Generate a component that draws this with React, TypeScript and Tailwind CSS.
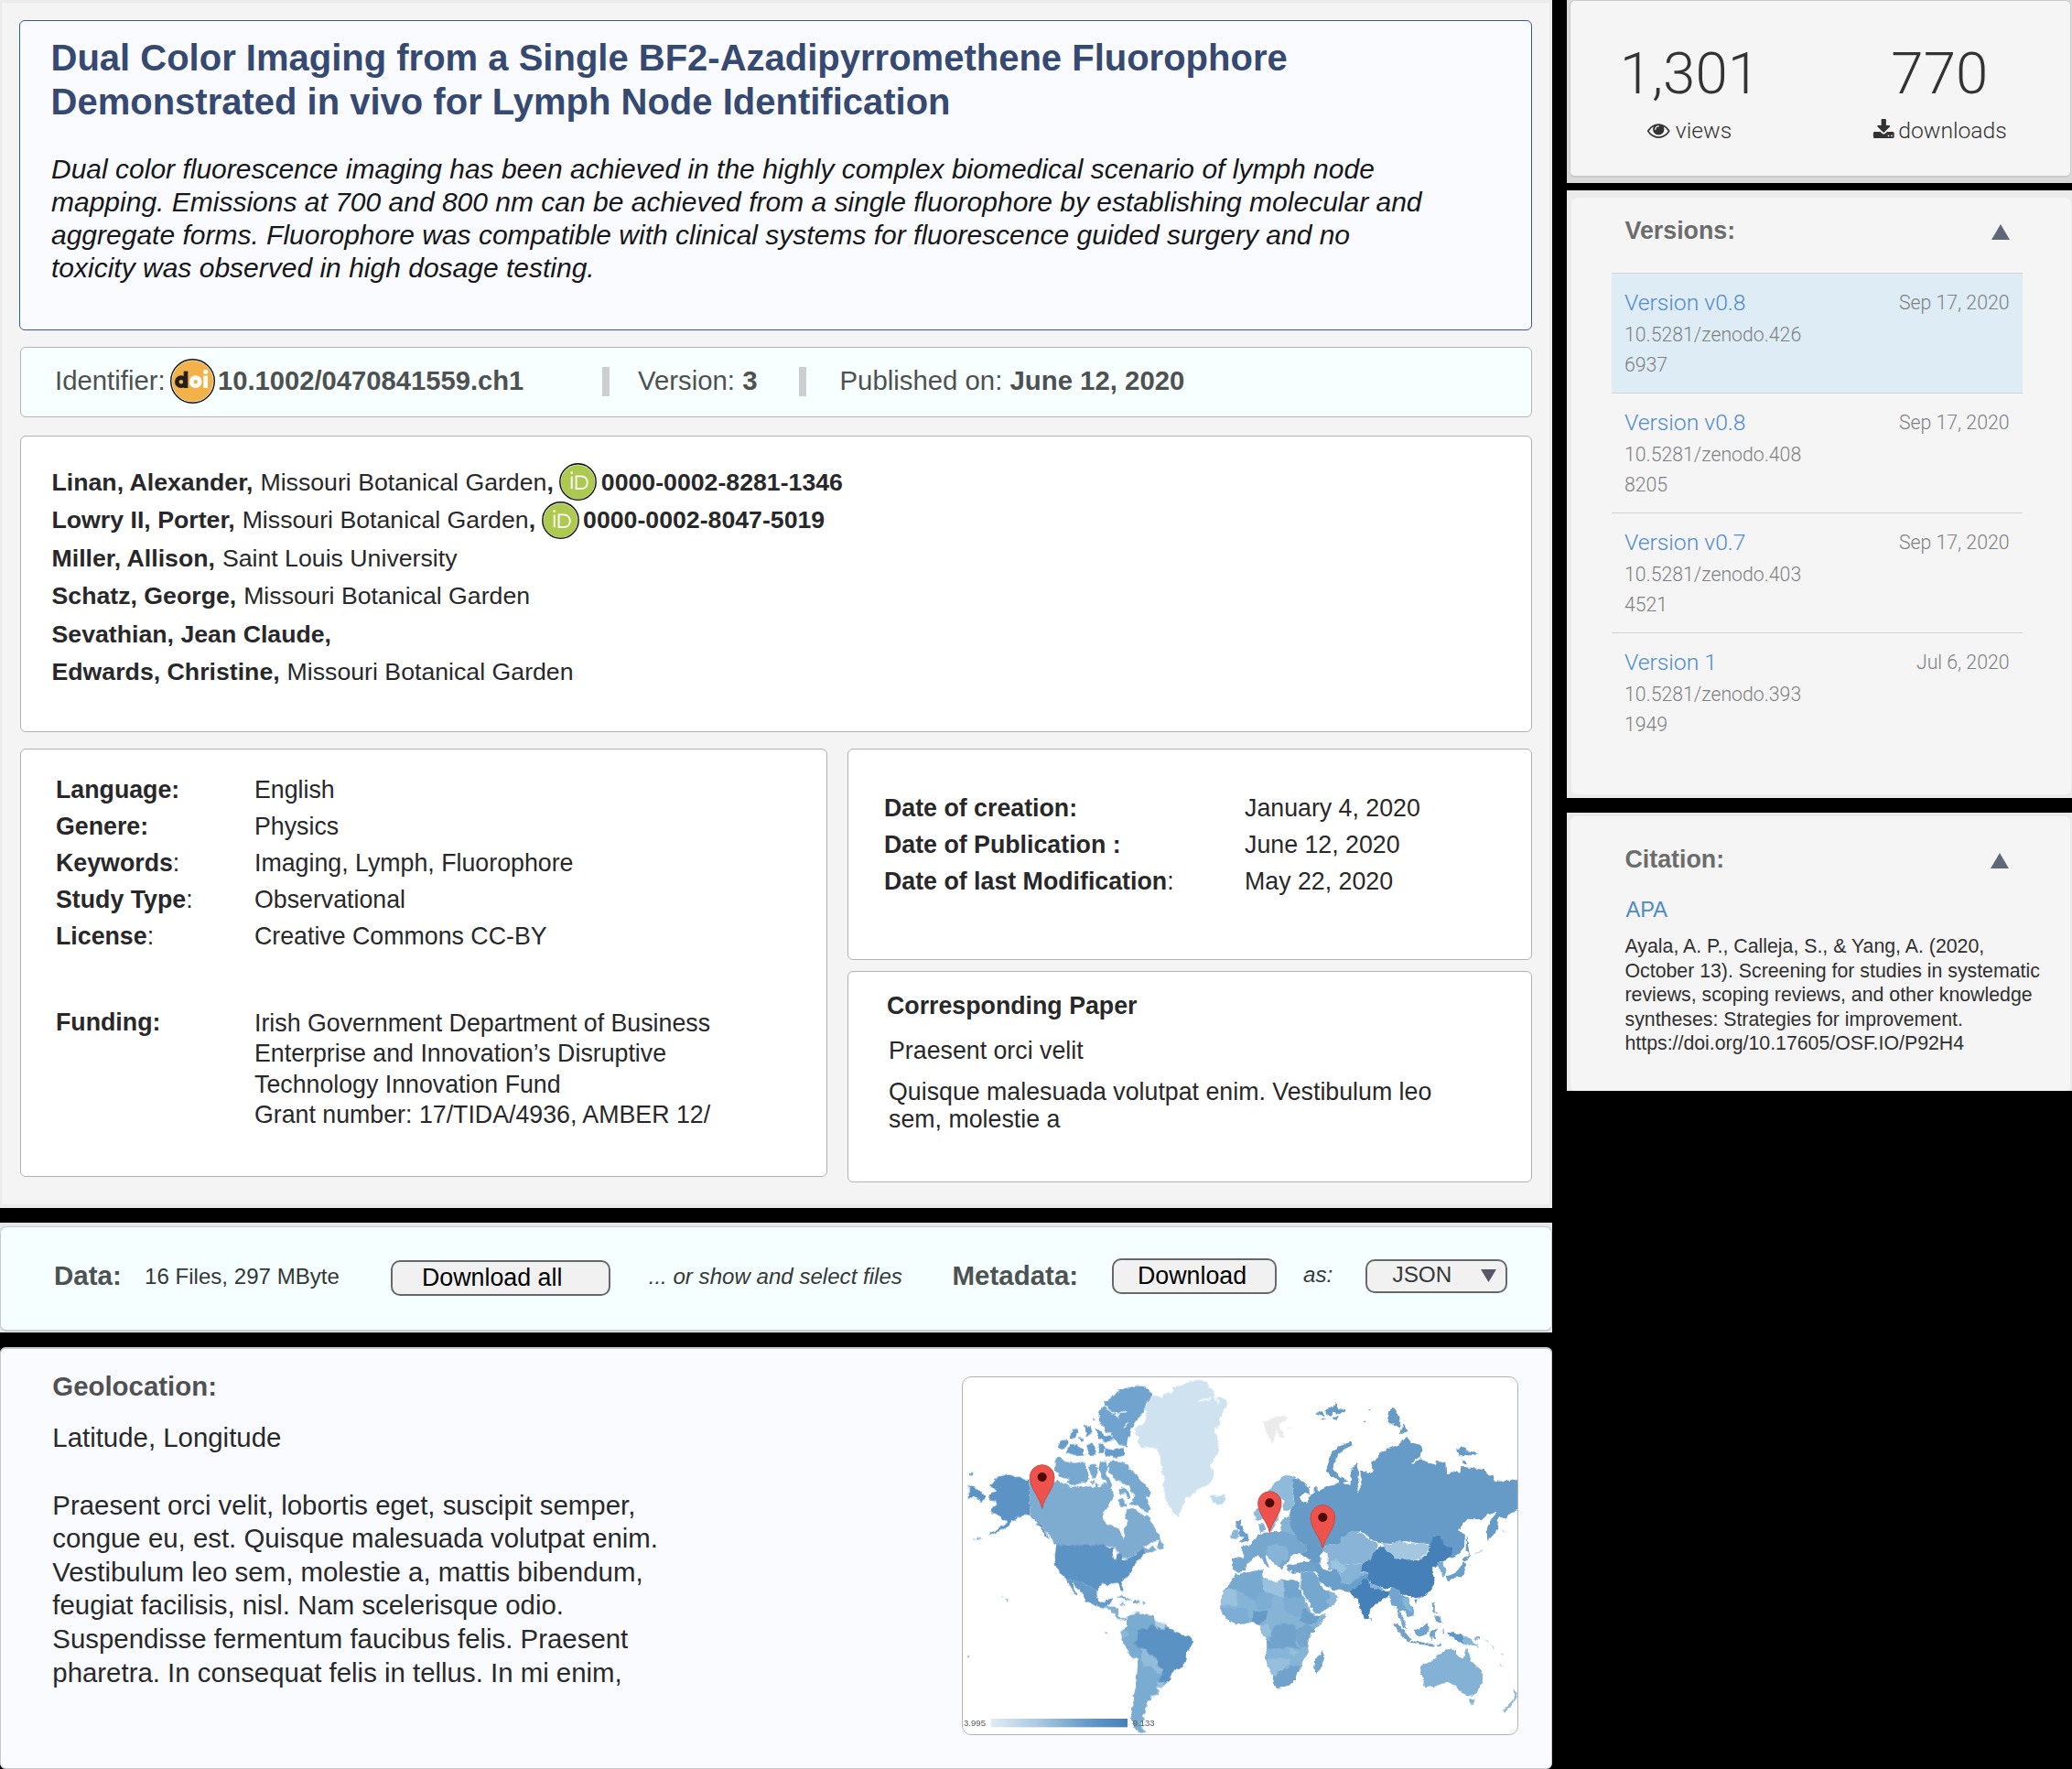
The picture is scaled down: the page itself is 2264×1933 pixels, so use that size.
import React from "react";

type Shape = [fill: string, d: string];

/* Land areas of the western half; chart units are a third of a pixel. */
const WEST: Shape[] = [
  ["#5a93c4", "M255,380L235,378 222,370 208,371 195,365 178,360 162,368 150,368 135,385 122,402 140,408 146,418 132,422 122,436 126,448 142,450 148,460 135,470 128,480 135,492 148,494 158,502 165,512 182,514 170,528 150,542 130,552 115,562 135,556 165,543 188,530 200,512 215,500 222,505 235,494 250,495 262,498 290,525 310,556 318,575 306,565 285,530 268,510 255,498Z"],
  ["#5a93c4", "M55,395L75,406 108,430 105,440 98,452 85,445 70,436 55,442Z M56,355L70,357 66,366 57,364Z"],
  ["#7eabd0", "M255,380L270,388 300,395 335,385 345,380 358,390 380,396 390,404 410,400 430,406 452,400 465,408 470,388 482,405 490,395 505,390 520,405 528,420 530,440 520,452 508,468 495,488 490,505 505,520 520,528 540,540 553,548 558,570 563,575 567,562 562,545 572,530 576,515 568,500 572,478 590,472 605,478 618,490 632,500 640,492 650,515 665,540 680,560 682,578 660,584 640,590 628,600 640,606 660,598 668,610 648,622 634,618 626,606 610,616 595,628 575,638 557,634 545,615 530,600 510,600 500,595 342,596 328,580 318,565 305,545 290,525 275,510 255,496Z"],
  ["#7eabd0", "M680,575L692,590 698,606 685,608 668,600 672,588Z"],
  ["#5a93c4", "M342,595L500,595 512,604 535,604 525,614 530,640 538,640 540,618 552,622 558,642 575,640 600,625 615,612 626,604 635,622 620,635 608,648 600,655 588,672 582,688 570,700 558,712 554,722 562,742 555,745 547,725 540,718 520,720 510,726 492,722 480,735 474,745 460,738 452,725 435,722 425,715 410,715 395,710 375,706 360,692 347,675 337,655 337,625Z"],
  ["#669bc9", "M375,706L395,710 410,715 425,715 435,722 452,725 460,738 474,745 475,765 485,780 500,782 508,772 525,768 522,780 512,792 500,800 480,796 460,788 435,775 430,758 415,740 400,720 392,714 398,730 412,755 405,758 390,735Z"],
  ["#83b1d4", "M500,800L512,795 530,795 545,800 545,820 552,832 572,834 568,842 545,838 530,818 515,806Z"],
  ["#6fa2cc", "M538,766L555,758 575,768 592,776 575,774 555,766Z M594,775L616,778 612,784 592,784Z M624,782h10v4h-10Z M550,785h14v4h-14Z M174,768L184,775 180,780Z M160,762h5v4h-5Z M502,877h6v6h-6Z M50,960h8v4h-8Z M66,571h6v4h-6Z M80,569h14v4h-14Z"],
  ["#76a8d0", "M512,320L545,318 560,325 578,330 580,345 600,355 610,372 620,385 640,400 652,425 645,435 635,430 640,455 648,475 640,488 620,478 605,462 578,460 590,450 600,430 588,420 580,400 560,392 550,382 538,388 530,370 515,352 510,335Z M545,412L562,405 578,415 585,440 575,440 570,425 552,428Z M545,448L556,436 566,450 574,468 550,466Z"],
  ["#76a8d0", "M338,310L352,306 372,320 400,325 432,320 442,345 450,375 440,385 420,392 400,398 375,388 385,380 365,375 350,370 345,355 335,345Z M446,335L472,325 478,360 470,378 455,368Z M485,318L505,318 510,345 500,360 515,375 525,400 515,405 505,385 488,370 480,345Z M455,385L468,380 462,396Z"],
  ["#669cca", "M345,275L355,255 375,245 380,262 365,280 350,280Z M372,290L390,262 408,266 430,280 432,300 410,302 390,295Z M385,235L400,212 412,218 405,240 390,245Z M433,198L455,208 460,230 440,235Z M440,265L462,262 475,296 450,300Z M480,260L495,262 500,292 482,292Z M500,276L525,282 562,275 565,300 540,306 505,302Z M468,210L490,222 500,240 520,232 530,250 505,255 480,245Z M460,178L467,180 464,188Z M415,238L432,246 425,258Z"],
  ["#6fa4ce", "M500,125L520,112 545,92 550,82 575,78 600,72 625,73 645,85 657,100 650,120 635,140 625,160 610,180 600,190 595,205 585,212 588,235 575,245 572,270 545,265 535,250 525,240 520,225 505,225 495,205 482,190 480,165 490,145 500,138Z"],
  ["#cfe2f0", "M600,210L630,195 637,172 635,160 628,148 640,120 665,102 690,112 700,92 720,98 725,80 760,65 795,52 830,55 845,75 858,95 855,110 885,108 907,130 890,155 880,175 875,200 860,215 868,235 875,262 870,290 858,315 845,335 858,355 855,380 840,397 815,405 795,420 780,435 765,440 755,465 745,500 725,490 712,470 700,445 695,415 690,395 698,380 690,360 685,330 682,305 670,280 655,275 635,272 620,278 612,262 605,255 615,245 603,235 598,222Z"],
  ["#bfd8ea", "M842,432L855,430 875,434 893,428 897,445 885,460 865,460 850,455 855,445Z"],
  ["#7aabd1", "M572,834L585,820 610,815 630,822 655,825 665,838 680,848 698,850 712,868 755,888 780,895 791,910 780,930 770,945 768,970 755,995 735,1000 722,1015 715,1035 700,1048 688,1062 672,1060 680,1072 670,1085 652,1088 650,1102 638,1108 642,1118 632,1130 635,1142 625,1155 632,1165 620,1180 622,1195 638,1208 615,1210 600,1198 590,1180 586,1160 590,1130 597,1110 595,1085 602,1060 605,1020 608,990 608,970 590,960 575,945 568,925 555,905 558,885 565,870 572,855Z"],
  ["#5a92c4", "M612,872L640,868 655,855 662,862 690,870 710,862 712,872 730,880 755,888 780,893 791,910 780,930 770,945 768,970 755,995 735,1000 722,1015 715,1035 700,1048 690,1042 675,1038 688,1022 688,1000 675,990 670,965 648,955 635,935 612,930 595,915 610,900Z"],
  ["#93bcdb", "M620,932L635,935 648,955 670,965 672,988 688,1000 688,1017 672,1015 655,992 625,990 620,965Z"],
  ["#8ab6d8", "M556,872L575,876 580,890 562,900 554,892Z"],
  ["#b2d0e5", "M662,838L680,848 700,852 696,866 670,866Z"],
  ["#9cc1de", "M675,1038L696,1048 688,1062 672,1058Z"],
];

/* Land areas of the eastern half, drawn from their own origin. */
const EAST: Shape[] = [
  ["#ebebeb", "M180,190L210,180 225,168 262,176 248,190 230,196 250,240 235,242 222,215 215,258 207,264 190,225Z M256,208h18v3h-18Z M288,172h5v3h-5Z"],
  ["#6a9fcb", "M90,516L108,510 105,525 115,540 132,568 130,580 100,588 114,572 98,558 100,545 90,535Z"],
  ["#8ab6d8", "M78,550L95,543 98,560 92,575 73,572Z"],
  ["#90bada", "M150,482L165,470 185,440 205,405 230,380 255,365 278,368 285,378 275,390 278,420 282,462 270,480 250,482 240,472 250,450 238,440 225,470 232,500 222,525 212,548 202,540 190,512 175,508 155,512Z"],
  ["#84b2d5", "M164,525L180,525 188,548 170,552Z M236,520L250,502 270,500 272,520 290,545 280,565 245,568 238,545Z"],
  ["#76a7cf", "M105,600L132,594 150,575 165,560 185,553 205,552 236,548 262,560 290,560 300,585 322,592 325,610 310,622 285,620 270,630 265,650 250,655 240,678 225,660 200,640 190,625 185,640 205,665 195,668 178,645 165,630 150,632 140,645 125,655 125,665 115,680 95,682 80,678 80,634 115,637 118,620Z"],
  ["#86b4d6", "M192,600L212,590 240,595 262,610 262,640 240,645 240,660 228,662 205,640 192,622Z"],
  ["#6fa2cc", "M257,662L280,655 300,652 330,645 352,650 370,660 362,682 340,680 305,682 280,686 262,678Z"],
  ["#669bc8", "M278,375L300,380 330,405 332,430 318,425 300,432 310,442 325,450 328,438 350,420 345,405 352,418 370,412 395,400 425,395 432,382 465,398 470,350 485,325 494,360 490,400 488,428 502,402 498,352 530,355 542,350 530,325 560,310 560,295 590,278 630,262 650,238 665,258 695,265 700,290 692,312 720,322 745,330 748,320 777,322 780,362 800,350 825,358 828,338 865,340 905,348 915,362 935,370 938,386 980,382 1020,380 1020,476 990,490 975,508 950,500 948,540 935,560 915,580 912,545 920,520 935,500 945,488 920,490 900,508 870,510 850,508 818,545 842,560 838,600 822,622 798,640 780,625 800,605 770,590 740,562 725,590 700,590 640,580 600,590 560,588 530,570 500,550 470,550 435,575 430,590 400,590 372,602 385,612 366,628 368,655 340,650 305,625 325,610 320,592 300,585 285,560 270,535 265,500 270,480 283,460 278,420 275,390Z"],
  ["#669bc8", "M385,350L395,320 405,290 430,270 470,255 474,266 445,280 422,300 412,325 408,345 430,372 460,385 440,388 400,366Z M590,160L608,142 620,165 630,190 625,210 600,195 585,180Z M628,232L640,195 655,222Z M812,280L835,272 850,285 885,292 872,300 820,300Z M835,312L850,328 832,325Z M350,160L375,155 380,172 362,170Z M385,150L408,142 418,125 425,145 450,150 430,165 408,160 400,172 385,162Z M370,178h14v5h-14Z M404,176L425,172 418,182Z M346,405h12v12h-12Z M845,562L852,598 857,628 844,610Z M525,150h6v5h-6Z M510,190h6v4h-6Z"],
  ["#8ab4d7", "M372,602L400,590 430,590 435,570 470,546 500,555 530,575 558,590 545,615 530,640 505,655 470,655 440,660 420,640 398,645 388,625 375,615Z"],
  ["#86b4d6", "M390,640L420,640 445,660 470,655 505,655 500,680 525,685 500,700 480,715 460,725 430,715 435,690 415,675 395,675Z"],
  ["#9dc4df", "M400,645L425,645 455,668 440,685 405,668Z"],
  ["#6a9fcb", "M345,652L365,660 375,672 395,678 415,675 435,690 432,715 440,744 410,740 385,728 365,712 355,685Z M432,715L460,725 500,695 525,685 520,700 500,722 480,735 475,750 440,745Z"],
  ["#76a7cf", "M303,682L345,680 360,700 370,722 385,740 405,750 425,760 415,785 385,805 350,822 340,800 320,765 303,735Z"],
  ["#8ab6d8", "M390,742L408,750 426,762 415,785 395,795 388,775 402,765Z"],
  ["#4480b8", "M560,600L580,600 590,615 630,640 690,645 725,615 720,600 735,565 758,562 770,590 802,605 795,630 780,640 755,650 750,662 733,670 742,695 740,722 725,745 700,765 678,768 660,758 635,757 620,738 600,735 570,735 530,718 520,700 525,685 500,678 505,655 530,640 545,615Z M675,775L686,770 680,784Z"],
  ["#4480b8", "M478,738L505,712 520,700 530,722 560,740 585,742 600,745 590,765 570,772 545,790 530,808 525,838 512,836 495,800 490,770 475,765 465,750Z"],
  ["#86b4d6", "M530,718L575,736 570,746 530,730Z M528,832L538,838 532,846Z"],
  ["#a4c6df", "M568,590L600,592 630,576 650,588 680,592 712,588 728,605 715,620 690,642 650,645 610,635 590,618Z"],
  ["#72a5cd", "M590,745L605,732 622,738 635,760 655,765 655,780 675,805 672,825 655,830 645,812 630,808 635,830 648,855 650,870 638,862 622,830 618,795 600,792Z"],
  ["#86b8d6", "M635,768L650,764 660,790 668,812 655,808 640,790Z"],
  ["#79aad1", "M755,650L770,648 780,690 768,700 760,675 750,664Z"],
  ["#6a9fcb", "M838,648L844,668 832,697 800,702 785,714 778,696 810,686 826,665Z M832,636L860,626 852,644 838,648Z"],
  ["#6fa2cc", "M733,782L743,785 742,808 755,818 735,815Z M740,828L760,830 766,852 750,846Z M605,850L622,855 650,882 664,905 650,908 625,880Z M658,907L700,912 742,920 738,928 690,918 655,912Z M675,872L700,865 715,850 725,865 716,890 695,896 680,888Z M726,878L735,870 755,870 742,882 750,900 740,902 736,892 732,910Z M766,868h6v16h-6Z M745,920L765,916 758,926Z"],
  ["#5f97c6", "M785,880L800,882 815,885 838,890 838,920 815,905 795,895Z"],
  ["#86b4d6", "M838,890L862,902 872,916 888,930 862,924 838,920Z M870,898L890,892 890,902 876,905Z"],
  ["#c9d6de", "M905,905L920,912 916,916Z M922,916L942,932 934,932Z M962,948h8v6h-8Z M955,980L970,990 962,992Z M880,620L900,608 902,612 872,630Z M960,542L974,550 966,550Z"],
  ["#84b2d5", "M697,990L715,980 740,970 752,955 770,945 785,935 812,938 812,955 835,965 845,930 855,950 862,975 885,995 900,1020 898,1045 885,1070 870,1088 845,1085 825,1075 812,1055 790,1045 765,1048 740,1058 712,1062 705,1050 707,1030 695,1010Z M857,1098L874,1098 870,1116 862,1119Z"],
  ["#90bcda", "M998,1062L1014,1078 1012,1095 1000,1108 988,1130 972,1144 964,1136 985,1115 1000,1100 1005,1085Z"],
  ["#86b4d6", "M90,690L120,685 155,678 178,675 182,700 200,708 225,718 240,704 262,710 298,712 298,735 315,765 338,812 348,828 385,818 375,845 350,870 330,895 325,915 330,950 310,970 303,1000 290,1012 285,1035 260,1058 222,1064 215,1040 200,1000 185,965 192,930 190,900 170,880 172,860 145,845 130,850 90,855 60,835 38,805 40,775 55,740 78,715Z"],
  ["#76a8d0", "M85,695L120,685 178,677 176,712 182,745 155,780 130,765 95,740 60,738Z"],
  ["#9ac1dd", "M178,705L200,708 225,718 245,706 248,768 215,755 182,745Z M55,740L90,738 97,795 40,792 42,770Z"],
  ["#72a5cd", "M248,710L298,712 296,735 310,766 248,766Z"],
  ["#7dadd2", "M248,768L312,766 318,795 300,830 262,820 245,800Z M155,780L182,745 215,758 205,800 160,805Z M40,800L130,800 138,848 90,855 60,835Z"],
  ["#659ac7", "M145,812L195,808 190,835 165,855 142,845Z"],
  ["#6b9fca", "M315,800L345,828 372,825 350,850 320,855 298,840Z"],
  ["#70a3cc", "M215,860L245,850 282,856 290,880 285,915 298,935 250,925 210,920 200,900Z M192,906L210,920 250,926 248,935 192,932Z"],
  ["#74a6ce", "M288,870L318,856 350,868 328,900 325,930 298,930 288,900Z"],
  ["#96bfdc", "M190,968L240,965 268,970 262,990 240,1008 225,1006 222,1028 208,1020Z M172,860L200,850 206,880 188,900 172,880Z M268,930L295,945 285,960 265,950Z"],
  ["#6fa2cc", "M208,1025L225,1022 228,1006 262,1000 270,985 300,992 290,1012 285,1035 260,1058 222,1064Z"],
  ["#74a6ce", "M373,938L381,960 368,1000 355,1012 344,1000 348,968 365,957Z"],
];

const SEAS =
  "M364,630L378,614 390,618 380,634 386,650 396,668 392,678 374,670 376,652Z M268,640L284,620 310,628 336,642 330,650 300,645 272,656Z M368,722L386,734 396,744 380,742Z M318,428L300,434 306,452 316,448 322,458 330,440Z M665,326L690,306 692,312 672,328Z";

function Pin({ x, y, r, tip }: { x: number; y: number; r: number; tip: number }) {
  return (
    <g>
      <path
        d={`M${x},${tip} C${x - 6},${y + r * 1.65} ${x - r},${y + r * 0.95} ${x - r},${y} A${r},${r} 0 1 1 ${x + r},${y} C${x + r},${y + r * 0.95} ${x + 6},${y + r * 1.65} ${x},${tip}Z`}
        fill="#ee524d"
        stroke="#cd4640"
        strokeWidth="3"
      />
      <circle cx={x} cy={y} r="15" fill="#4b0805" />
    </g>
  );
}

function WorldMap() {
  return (
    <svg viewBox="35 44 1818 1170" className="block h-full w-full" preserveAspectRatio="none">
      <defs>
        <filter id="coast" x="0" y="0" width="1900" height="1300" filterUnits="userSpaceOnUse">
          <feTurbulence type="fractalNoise" baseFrequency="0.06" numOctaves="3" seed="4" result="n" />
          <feDisplacementMap in="SourceGraphic" in2="n" scale="13" xChannelSelector="R" yChannelSelector="G" />
        </filter>
        <linearGradient id="scale">
          <stop offset="0" stopColor="#e0ebf4" />
          <stop offset="0.35" stopColor="#a9c8e0" />
          <stop offset="0.7" stopColor="#669bc8" />
          <stop offset="1" stopColor="#4480b8" />
        </linearGradient>
      </defs>
      <g filter="url(#coast)">
        {WEST.map(([fill, d], i) => (
          <path key={i} fill={fill} d={d} />
        ))}
        <path
          d="M500,138L520,158 545,165 570,155M535,165L545,180M575,195L560,210M805,122L850,112M862,112L875,130M455,300L480,305 560,308M440,240L470,255 510,262"
          fill="none"
          stroke="#fff"
          strokeWidth="4"
        />
        <g transform="translate(840 0)">
          {EAST.map(([fill, d], i) => (
            <path key={i} fill={fill} d={d} />
          ))}
          <path d={SEAS} fill="#fff" />
        </g>
      </g>
      <Pin x={295} y={371} r={40} tip={474} />
      <Pin x={1041} y={456} r={38} tip={553} />
      <Pin x={1215} y={503} r={40} tip={605} />
      <rect x="127" y="1163" width="448" height="28" fill="url(#scale)" />
      <g fill="#55585b" fontFamily='"Liberation Sans", sans-serif' fontSize="28">
        <text x="38" y="1187" textLength="72" lengthAdjust="spacingAndGlyphs">3.995</text>
        <text x="592" y="1187" textLength="72" lengthAdjust="spacingAndGlyphs">9.133</text>
      </g>
    </svg>
  );
}

function DoiLogo() {
  return (
    <svg viewBox="0 0 49 49" className="block size-[49px]">
      <circle cx="24.5" cy="24.5" r="23.8" fill="#fff" stroke="#111" strokeWidth="1.4" />
      <circle cx="24.5" cy="24.5" r="22.5" fill="#f2b149" />
      <g fill="none" strokeWidth="4.6">
        <circle cx="11.9" cy="25.2" r="4.6" stroke="#231f20" />
        <path d="M17,13.6V32" stroke="#231f20" />
        <circle cx="27.7" cy="25.2" r="4.6" stroke="#fff" />
        <path d="M38.7,18.6V32" stroke="#fff" />
      </g>
      <circle cx="38.7" cy="14.3" r="2.6" fill="#fff" />
    </svg>
  );
}

function OrcidLogo() {
  return (
    <svg viewBox="0 0 41 41" className="block size-[41px] shrink-0">
      <circle cx="20.5" cy="20.5" r="19.7" fill="#e8e8e4" stroke="#111" strokeWidth="1.4" />
      <circle cx="20.5" cy="20.9" r="18.6" fill="#adc94f" />
      <g fill="none" stroke="#fff" strokeWidth="1.9">
        <path d="M13.7,14.6V28.2" />
        <path d="M18.6,14.4V28h5.2c4.6,0 7-3 7-6.8s-2.4-6.8-7-6.8Z" />
      </g>
      <circle cx="13.7" cy="10.6" r="1.3" fill="#fff" />
    </svg>
  );
}

function EyeIcon() {
  return (
    <svg viewBox="0 0 1792 1792" className="block size-[24.5px]" fill="#333">
      <path d="M1664 960q-152-236-381-353 61 104 61 225 0 185-131.5 316.5t-316.5 131.5-316.5-131.5-131.5-316.5q0-121 61-225-229 117-381 353 133 205 333.5 326.5t434.5 121.5 434.5-121.5 333.5-326.5zm-720-384q0-20-14-34t-34-14q-125 0-214.5 89.5t-89.5 214.5q0 20 14 34t34 14 34-14 14-34q0-86 61-147t147-61q20 0 34-14t14-34zm848 384q0 34-20 69-140 230-376.5 368.5t-499.5 138.5-499.5-139-376.5-368q-20-35-20-69t20-69q140-229 376.5-368t499.5-139 499.5 139 376.5 368q20 35 20 69z" />
    </svg>
  );
}

function DownloadIcon() {
  return (
    <svg viewBox="0 0 1792 1792" className="block size-[24.5px]" fill="#333">
      <path d="M1344 1344q0-26-19-45t-45-19-45 19-19 45 19 45 45 19 45-19 19-45zm256 0q0-26-19-45t-45-19-45 19-19 45 19 45 45 19 45-19 19-45zm128-224v320q0 40-28 68t-68 28h-1472q-40 0-68-28t-28-68v-320q0-40 28-68t68-28h465l135 136q58 56 136 56t136-56l136-136h464q40 0 68 28t28 68zm-325-569q17 41-14 70l-448 448q-18 19-45 19t-45-19l-448-448q-31-29-14-70 17-39 59-39h256v-448q0-26 19-45t45-19h256q26 0 45 19t19 45v448h256q42 0 59 39z" />
    </svg>
  );
}

function Triangle({ down = false }: { down?: boolean }) {
  return down ? (
    <svg viewBox="0 0 17 14" className="block h-[14px] w-[17px]">
      <path d="M0,0H17L8.5,14Z" fill="#555868" />
    </svg>
  ) : (
    <svg viewBox="0 0 20 17" className="block h-[17px] w-[20px]">
      <path d="M0,17H20L10,0Z" fill="#5f6878" />
    </svg>
  );
}

const AUTHORS = [
  { name: "Linan, Alexander,", place: "Missouri Botanical Garden", orcid: "0000-0002-8281-1346" },
  { name: "Lowry II, Porter,", place: "Missouri Botanical Garden", orcid: "0000-0002-8047-5019" },
  { name: "Miller, Allison,", place: "Saint Louis University" },
  { name: "Schatz, George,", place: "Missouri Botanical Garden" },
  { name: "Sevathian, Jean Claude,", place: "" },
  { name: "Edwards, Christine,", place: "Missouri Botanical Garden" },
];

const VERSIONS = [
  { title: "Version v0.8", doi: ["10.5281/zenodo.426", "6937"], date: "Sep 17, 2020" },
  { title: "Version v0.8", doi: ["10.5281/zenodo.408", "8205"], date: "Sep 17, 2020" },
  { title: "Version v0.7", doi: ["10.5281/zenodo.403", "4521"], date: "Sep 17, 2020" },
  { title: "Version 1", doi: ["10.5281/zenodo.393", "1949"], date: "Jul 6, 2020" },
];

const CARD = "rounded-[6px] border border-[#b0b2b2] bg-white";

function Record() {
  return (
    <section className="h-[1320px] border-t-[3px] border-r-[3px] border-b-[4px] border-l-2 border-[#ebebeb] bg-[#f4f4f4] pt-[19px] pl-[19px] whitespace-nowrap">
      <div className="h-[339px] w-[1653px] rounded-[6px] border-x border-y-[1.5px] border-[#3d5787] bg-[#fafbff] pt-[16px] pl-[33.5px]">
        <h1 className="text-[40px] leading-[48px] font-bold text-[#364970]">
          Dual Color Imaging from a Single BF2-Azadipyrromethene Fluorophore
          <br />
          Demonstrated in vivo for Lymph Node Identification
        </h1>
        <p className="mt-[31.5px] pl-[0.5px] text-[30px] leading-[36.1px] text-[#16171a] italic">
          Dual color fluorescence imaging has been achieved in the highly complex biomedical scenario of lymph node
          <br />
          mapping. Emissions at 700 and 800 nm can be achieved from a single fluorophore by establishing molecular and
          <br />
          aggregate forms. Fluorophore was compatible with clinical systems for fluorescence guided surgery and no
          <br />
          toxicity was observed in high dosage testing.
        </p>
      </div>

      <div className="mt-[18px] ml-px flex h-[77px] w-[1652px] items-center rounded-[6px] border border-[#b0b5b5] bg-[#f7ffff] pb-[2px] pl-[37px] text-[29.35px] leading-[40px] text-[#4d5151]">
        <div className="-mt-px w-[125.5px]">Identifier:</div>
        <div className="w-[52.5px]">
          <DoiLogo />
        </div>
        <div className="-mt-px w-[420px] text-[29.2px] font-bold">10.1002/0470841559.ch1</div>
        <div className="h-8 w-2 bg-[#cbcfcf]" />
        <div className="-mt-[2px] w-[207px] pl-[31px]">
          Version: <b>3</b>
        </div>
        <div className="h-8 w-2 bg-[#cbcfcf]" />
        <div className="-mt-[2px] pl-[36.5px]">
          Published on: <b>June 12, 2020</b>
        </div>
      </div>

      <div className={`${CARD} mt-[20px] ml-px h-[324px] w-[1652px] pt-[30px] pl-[33.5px] text-[26.7px] text-[#28282a]`}>
        {AUTHORS.map((a) => (
          <div key={a.name} className="flex h-[41.4px] items-center leading-[41.4px]">
            <span>
              <b>{a.name}</b> <span className="ml-[0.5px]">{a.place}</span>
              {a.orcid && <b>,</b>}
            </span>
            {a.orcid && (
              <>
                <span className="-mt-[2px] ml-[6.5px]">
                  <OrcidLogo />
                </span>
                <b className="ml-[4.5px]">{a.orcid}</b>
              </>
            )}
          </div>
        ))}
      </div>

      <div className="mt-[18px] ml-px flex items-start text-[26.75px] leading-[40px] text-[#28282a]">
        <div className={`${CARD} flex h-[468px] w-[882px] pl-[38px]`}>
          <div className="w-[217px] pt-[24px] font-bold">
            <div>Language:</div>
            <div>Genere:</div>
            <div>
              Keywords<span className="font-normal">:</span>
            </div>
            <div>
              Study Type<span className="font-normal">:</span>
            </div>
            <div>
              License<span className="font-normal">:</span>
            </div>
            <div className="mt-[53.5px]">Funding:</div>
          </div>
          <div className="pt-[24.4px]">
            <div>English</div>
            <div>Physics</div>
            <div>Imaging, Lymph, Fluorophore</div>
            <div>Observational</div>
            <div>Creative Commons CC-BY</div>
            <p className="mt-[58.6px] leading-[33.35px]">
              Irish Government Department of Business
              <br />
              Enterprise and Innovation’s Disruptive
              <br />
              Technology Innovation Fund
              <br />
              Grant number: 17/TIDA/4936, AMBER 12/
            </p>
          </div>
        </div>

        <div className="ml-[22px] w-[748px]">
          <div className={`${CARD} flex h-[231px] pt-[43.5px] pl-[39px]`}>
            <div className="w-[394px] font-bold">
              <div>Date of creation:</div>
              <div>Date of Publication :</div>
              <div>
                Date of last Modification<span className="font-normal">:</span>
              </div>
            </div>
            <div>
              <div>January 4, 2020</div>
              <div>June 12, 2020</div>
              <div>May 22, 2020</div>
            </div>
          </div>
          <div className={`${CARD} mt-[12px] h-[231px] pt-[22px] pl-[42px]`}>
            <div className="leading-[30px] font-bold">Corresponding Paper</div>
            <div className="mt-[19px] pl-[2px] leading-[30px]">Praesent orci velit</div>
            <p className="mt-[16px] pl-[2px] leading-[29.6px]">
              Quisque malesuada volutpat enim. Vestibulum leo
              <br />
              sem, molestie a
            </p>
          </div>
        </div>
      </div>
    </section>
  );
}

function DataBar() {
  return (
    <section className="mt-4 h-[120px] bg-[#e4e8e8] pt-[4px] whitespace-nowrap">
      <div className="h-[115px] rounded-[7px] border-[1.5px] border-b-2 border-[#c6cbcb] bg-[#f5ffff] pl-[58px]">
        <div className="flex h-[106px] items-center text-[24.1px] leading-[40px] text-[#343838]">
          <div className="w-[99px] text-[29.5px] font-bold text-[#4d5252]">Data:</div>
          <div className="w-[269px] pt-[2px]">16 Files, 297 MByte</div>
          <div className="w-[281.7px]">
            <button className="mt-[5px] block h-[39px] w-[240px] rounded-[10px] border-2 border-[#66696a] bg-[#f2f1f1] pl-[32px] text-left text-[26.8px] leading-[33px] text-black">
              Download all
            </button>
          </div>
          <div className="w-[331.8px] pt-[2px] italic">... or show and select files</div>
          <div className="w-[175px] text-[29.5px] font-bold text-[#4d5252]">Metadata:</div>
          <div className="w-[208.5px]">
            <button className="block h-[39px] w-[180px] rounded-[10px] border-2 border-[#66696a] bg-[#f2f1f1] pl-[25.5px] text-left text-[26.8px] leading-[33px] text-black">
              Download
            </button>
          </div>
          <div className="-mt-[1.5px] w-[68.5px] italic">as:</div>
          <button className="flex h-[37px] w-[155px] items-center justify-between rounded-[10px] border-2 border-[#66696a] bg-[#f2f1f1] pr-[10px] pl-[27px] text-[24.3px] leading-[30px]">
            <span className="-mt-[3px]">JSON</span>
            <Triangle down />
          </button>
        </div>
      </div>
    </section>
  );
}

function Geolocation() {
  return (
    <section className="mt-4 flex h-[461px] rounded-[6px] border-[1.5px] border-t-2 border-[#c9c9cc] bg-[#fafbff] whitespace-nowrap">
      <div className="w-[1050px] pt-[21px] pl-[56.3px] text-[29.4px] leading-[40px] text-[#28292c]">
        <h2 className="font-bold text-[#515154]">Geolocation:</h2>
        <div className="mt-[15.5px]">Latitude, Longitude</div>
        <p className="mt-[36px] leading-[36.65px]">
          Praesent orci velit, lobortis eget, suscipit semper,
          <br />
          congue eu, est. Quisque malesuada volutpat enim.
          <br />
          Vestibulum leo sem, molestie a, mattis bibendum,
          <br />
          feugiat facilisis, nisl. Nam scelerisque odio.
          <br />
          Suspendisse fermentum faucibus felis. Praesent
          <br />
          pharetra. In consequat felis in tellus. In mi enim,
        </p>
      </div>
      <div className="mt-[30px] h-[392px] w-[608px] overflow-hidden rounded-[10px] border border-[#b2b3b8] bg-white">
        <WorldMap />
      </div>
    </section>
  );
}

function Stats() {
  return (
    <section className="h-[200px] bg-[#d9d9d9] font-[Roboto] font-[350] text-[#333]">
      <div className="ml-[2.5px] flex h-[194px] w-[548px] rounded-[6px] border border-b-2 border-[#cacaca] bg-[#f5f5f5] pt-[47.5px]">
        <div className="flex w-[263px] flex-col items-center">
          <div className="text-[63.6px] leading-[64px] font-light">1,301</div>
          <div className="mt-[15px] flex items-center gap-[6px] text-[24.7px] leading-[30px]">
            <EyeIcon />
            views
          </div>
        </div>
        <div className="flex w-[286px] flex-col items-center">
          <div className="text-[63.6px] leading-[64px] font-light">770</div>
          <div className="mt-[15px] flex items-center gap-[4px] text-[24.7px] leading-[30px]">
            <DownloadIcon />
            downloads
          </div>
        </div>
      </div>
    </section>
  );
}

function Versions() {
  return (
    <section className="mt-2 h-[664px] bg-[#ebebeb] pt-[8px]">
      <div className="ml-[5px] h-[652px] w-[546px] rounded-[6px] bg-[#f5f5f5] pl-[44px]">
        <div className="flex h-[82px] w-[435px] items-start justify-between pt-[15.5px] pl-[14.5px]">
          <h3 className="text-[26.8px] leading-[40px] font-bold text-[#6c6c6c]">Versions:</h3>
          <div className="pt-[13px]">
            <Triangle />
          </div>
        </div>
        <div className="w-[449px] font-[Roboto] font-[350]">
          {VERSIONS.map((v, i) => (
            <div
              key={i}
              className={`flex h-[131px] justify-between border-t-[1.5px] border-[#d2d5d6] pt-[15px] pr-[14.5px] pl-[14px] text-[21.25px] leading-[33.4px] text-[#7d8082] ${i === 0 ? "bg-[#deecf5]" : ""}`}
            >
              <div>
                <div className="text-[24.7px] text-[#4f8ccb]">{v.title}</div>
                <div className="mt-[1.5px]">{v.doi[0]}</div>
                <div>{v.doi[1]}</div>
              </div>
              <div>{v.date}</div>
            </div>
          ))}
        </div>
      </div>
    </section>
  );
}

function Citation() {
  return (
    <section className="mt-4 h-[304px] bg-[#eaeaea] pt-[4px]">
      <div className="ml-[4px] h-[300px] w-[546px] rounded-[6px] bg-[#f5f5f5] pl-[59.5px] whitespace-nowrap">
        <div className="flex w-[419.5px] items-start justify-between pt-[27px]">
          <h3 className="text-[26.8px] leading-[40px] font-bold text-[#6c6c6c]">Citation:</h3>
          <div className="pt-[12.5px]">
            <Triangle />
          </div>
        </div>
        <div className="mt-[20px] pl-px text-[23.6px] leading-[30px] text-[#4f8ac6]">APA</div>
        <p className="mt-[12px] text-[21.3px] leading-[26.6px] text-[#303030]">
          Ayala, A. P., Calleja, S., &amp; Yang, A. (2020,
          <br />
          October 13). Screening for studies in systematic
          <br />
          reviews, scoping reviews, and other knowledge
          <br />
          syntheses: Strategies for improvement.
          <br />
          https://doi.org/10.17605/OSF.IO/P92H4
        </p>
      </div>
    </section>
  );
}

export default function App() {
  return (
    <div className="flex h-[1933px] w-[2264px] gap-4 overflow-hidden bg-black font-['Liberation_Sans',sans-serif]">
      <main className="w-[1696px]">
        <Record />
        <DataBar />
        <Geolocation />
      </main>
      <aside className="w-[552px]">
        <Stats />
        <Versions />
        <Citation />
      </aside>
    </div>
  );
}
